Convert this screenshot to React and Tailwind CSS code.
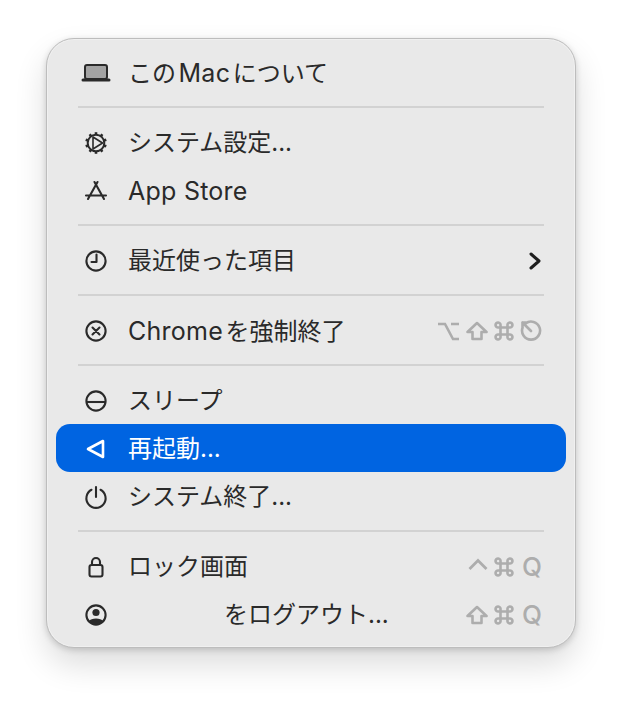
const iconClass = "h-6 w-6 fill-none stroke-current";

function Laptop() {
  return (
    <svg width="32" height="20" viewBox="0 0 32 20" fill="none">
      <rect x="5" y="2" width="22" height="14" rx="2" fill="#a3a3a3" stroke="#2a2a2a" strokeWidth="2" />
      <rect x="1.5" y="15.5" width="29" height="3" rx="1.5" fill="#2a2a2a" />
    </svg>
  );
}

function Gear() {
  const teeth = [0, 36, 72, 108, 144, 180, 216, 252, 288, 324];
  return (
    <svg className={iconClass} viewBox="0 0 24 24" strokeWidth="2">
      <circle cx="12" cy="12" r="8.3" />
      {teeth.map((a) => (
        <line key={a} x1="12" y1="1.2" x2="12" y2="4" strokeWidth="2.6" transform={`rotate(${a} 12 12)`} />
      ))}
      <path d="M9 6 L18.5 12 L9 18 Z" strokeWidth="1.6" strokeLinejoin="round" />
    </svg>
  );
}

function AppStoreIcon() {
  return (
    <svg className={iconClass} viewBox="0 0 24 24" strokeWidth="2.1" strokeLinecap="round">
      <path d="M10.5 3 L20 20 M13.5 3 L4 20 M2 16.5 H22" />
    </svg>
  );
}

function Clock() {
  return (
    <svg className={iconClass} viewBox="0 0 24 24" strokeWidth="2.1" strokeLinecap="round" strokeLinejoin="round">
      <circle cx="12" cy="12" r="9.6" />
      <path d="M12.5 5.5 V13 H7.5" />
    </svg>
  );
}

function ForceQuit() {
  return (
    <svg className={iconClass} viewBox="0 0 24 24" strokeWidth="2.1" strokeLinecap="round">
      <circle cx="12" cy="12" r="9.6" />
      <path d="M8.5 8.5 L15.5 15.5 M15.5 8.5 L8.5 15.5" />
    </svg>
  );
}

function Sleep() {
  return (
    <svg className={iconClass} viewBox="0 0 24 24" strokeWidth="2.1">
      <circle cx="12" cy="12" r="9.6" />
      <path d="M2.5 13 H21.5" />
    </svg>
  );
}

function Restart() {
  return (
    <svg className={iconClass} viewBox="0 0 24 24" strokeWidth="2.6" strokeLinejoin="round">
      <path d="M4 12 L19 4 V20 Z" />
    </svg>
  );
}

function Power() {
  return (
    <svg className={iconClass} viewBox="0 0 24 24" strokeWidth="2.1" strokeLinecap="round">
      <path d="M12 2 V12 M7.5 4.8 A9.6 9.6 0 1 0 16.5 4.8" />
    </svg>
  );
}

function Lock() {
  return (
    <svg className={iconClass} viewBox="0 0 24 24" strokeWidth="2.1" strokeLinejoin="round">
      <rect x="5.5" y="10" width="13" height="11.5" rx="2" />
      <path d="M8 10 V7 A4 4 0 0 1 16 7 V10" />
    </svg>
  );
}

function UserCircle() {
  return (
    <svg className={iconClass} viewBox="0 0 24 24" strokeWidth="2.1">
      <circle cx="12" cy="12" r="9.6" />
      <circle cx="12" cy="9.5" r="3.6" className="fill-current stroke-none" />
      <path d="M4.8 18 C7 14.5 17 14.5 19.2 18 A9.6 9.6 0 0 1 4.8 18 Z" className="fill-current stroke-none" />
    </svg>
  );
}

function Chevron() {
  return (
    <svg width="14" height="20" viewBox="0 0 14 20" fill="none" stroke="#1e1e1e" strokeWidth="3" strokeLinecap="round" strokeLinejoin="round">
      <path d="M3 3 L11 10 L3 17" />
    </svg>
  );
}

function OptionKey() {
  return (
    <svg width="22" height="20" viewBox="0 0 22 20" fill="none" stroke="#adadad" strokeWidth="2.6">
      <path d="M0 3 H7 L15 18 H21 M13 3 H21" />
    </svg>
  );
}

function ShiftKey() {
  return (
    <svg width="22" height="20" viewBox="0 0 22 20" fill="none" stroke="#adadad" strokeWidth="2.6" strokeLinejoin="round">
      <path d="M11 2 L20.5 11 H15.5 V18 H6.5 V11 H1.5 Z" />
    </svg>
  );
}

function CmdKey() {
  return (
    <svg width="20" height="20" viewBox="0 0 20 20" fill="none" stroke="#adadad" strokeWidth="2.6">
      <path d="M6.5 6.5 H13.5 V13.5 H6.5 Z M6.5 6.5 H4.5 A2.5 2.5 0 1 1 6.5 4.5 Z M13.5 6.5 V4.5 A2.5 2.5 0 1 1 15.5 6.5 Z M13.5 13.5 H15.5 A2.5 2.5 0 1 1 13.5 15.5 Z M6.5 13.5 V15.5 A2.5 2.5 0 1 1 4.5 13.5 Z" />
    </svg>
  );
}

function EjectKey() {
  return (
    <svg width="22" height="22" viewBox="0 0 22 22" fill="none" stroke="#adadad" strokeWidth="2.6" strokeLinecap="round">
      <path d="M5.5 3.5 A9 9 0 1 1 2.6 7.5 M2.5 2.5 L11 11 M2.5 2.5 H7.5 M2.5 2.5 V7.5" />
    </svg>
  );
}

function CtrlKey() {
  return (
    <svg width="20" height="20" viewBox="0 0 20 20" fill="none" stroke="#adadad" strokeWidth="2.8">
      <path d="M1.5 12 L10 3.5 L18.5 12" />
    </svg>
  );
}

function QKey() {
  return <span className="ml-[2px] text-[26px] font-medium leading-none text-[#adadad]">Q</span>;
}

// Latin runs sit a bit larger than the kana next to them
function Latin({ children }) {
  return <span className="text-[25px] tracking-[0.01em]">{children}</span>;
}

function MenuRow({ icon, label, active, right, indent }) {
  return (
    <div
      className={`flex h-[48px] items-center rounded-[14px] pl-[22px] pr-[24px] ${
        active ? "bg-[#0064e1] text-white" : "text-[#2a2a2a]"
      }`}
    >
      <span className="mr-[14px] flex w-[36px] shrink-0 items-center justify-center pt-[2px]">{icon}</span>
      <span className={`pt-[2px] text-[24px] leading-none whitespace-nowrap ${indent ? "ml-[96px]" : ""}`}>{label}</span>
      {right && <span className="ml-auto flex items-center gap-[6px] pt-[2px]">{right}</span>}
    </div>
  );
}

function Separator() {
  return (
    <div className="flex h-[22px] items-center px-[22px]">
      <div className="h-[2px] w-full bg-[#d2d2d2]" />
    </div>
  );
}

export default function App() {
  return (
    <div className="h-[702px] w-[622px] overflow-hidden bg-white pl-[46px] pt-[38px]" style={{ fontFamily: '"Inter", "Noto Sans CJK JP", sans-serif' }}>
      <div className="h-[610px] w-[530px] rounded-[28px] border border-[#bdbdbd] bg-[#e9e9e9] px-[9px] pt-[9px] shadow-[0_16px_32px_rgba(0,0,0,0.14),0_2px_6px_rgba(0,0,0,0.16),inset_0_0_0_1px_rgba(255,255,255,0.35)]">
        <MenuRow icon={<Laptop />} label={<>この<Latin>{"\u200AMac\u200A"}</Latin>について</>} />
        <Separator />
        <MenuRow icon={<Gear />} label="システム設定..." />
        <MenuRow icon={<AppStoreIcon />} label={<Latin>App Store</Latin>} />
        <Separator />
        <MenuRow icon={<Clock />} label="最近使った項目" right={<Chevron />} />
        <Separator />
        <MenuRow
          icon={<ForceQuit />}
          label={<><Latin>{"Chrome\u200A"}</Latin>を強制終了</>}
          right={
            <>
              <OptionKey />
              <ShiftKey />
              <CmdKey />
              <EjectKey />
            </>
          }
        />
        <Separator />
        <MenuRow icon={<Sleep />} label="スリープ" />
        <MenuRow icon={<Restart />} label="再起動..." active />
        <MenuRow icon={<Power />} label="システム終了..." />
        <Separator />
        <MenuRow
          icon={<Lock />}
          label="ロック画面"
          right={
            <>
              <CtrlKey />
              <CmdKey />
              <QKey />
            </>
          }
        />
        <MenuRow
          icon={<UserCircle />}
          label="をログアウト..."
          indent
          right={
            <>
              <ShiftKey />
              <CmdKey />
              <QKey />
            </>
          }
        />
      </div>
    </div>
  );
}
